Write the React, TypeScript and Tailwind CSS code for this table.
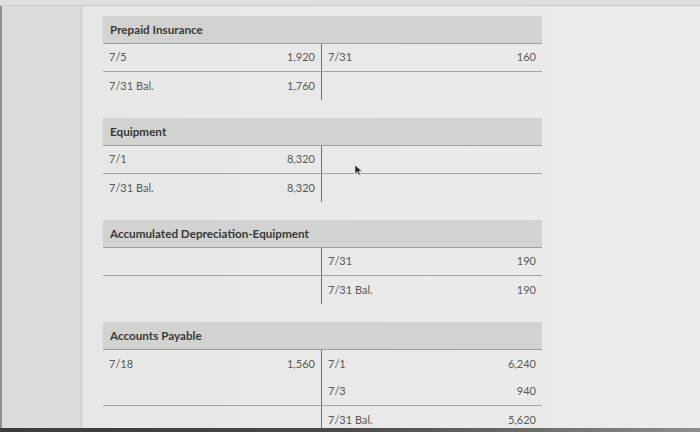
import { Fragment } from 'react';

type Cell = { label?: string; value?: string };
type Row = { left?: Cell; right?: Cell; line?: boolean };
type Account = { title: string; rows: Row[] };

const accounts: Account[] = [
  {
    title: 'Prepaid Insurance',
    rows: [
      { left: { label: '7/5', value: '1,920' }, right: { label: '7/31', value: '160' }, line: true },
      { left: { label: '7/31 Bal.', value: '1,760' } },
    ],
  },
  {
    title: 'Equipment',
    rows: [
      { left: { label: '7/1', value: '8,320' }, line: true },
      { left: { label: '7/31 Bal.', value: '8,320' } },
    ],
  },
  {
    title: 'Accumulated Depreciation-Equipment',
    rows: [
      { right: { label: '7/31', value: '190' }, line: true },
      { right: { label: '7/31 Bal.', value: '190' } },
    ],
  },
  {
    title: 'Accounts Payable',
    rows: [
      { left: { label: '7/18', value: '1,560' }, right: { label: '7/1', value: '6,240' } },
      { right: { label: '7/3', value: '940' }, line: true },
      { right: { label: '7/31 Bal.', value: '5,620' } },
    ],
  },
];

function Side({ cell }: { cell?: Cell }) {
  return (
    <div className="flex flex-1 items-center justify-between px-[6px]">
      <span>{cell?.label}</span>
      <span>{cell?.value}</span>
    </div>
  );
}

function TAccount({ account }: { account: Account }) {
  return (
    <div className="w-[439px] shrink-0">
      <div className="flex h-[28px] items-center border-b border-[#9d9e9c] bg-[#d2d3d1] px-[7px] text-[11.7px] font-bold text-[#383838]">
        {account.title}
      </div>
      <div className="text-[11px] text-[#585858]">
        {account.rows.map((row, i) => (
          <div
            key={i}
            className={`flex h-[28px] ${row.line ? 'border-b border-[#a3a4a2]' : ''}`}
          >
            <div className="flex w-[219px] border-r border-[#6e6f6d]">
              <Side cell={row.left} />
            </div>
            <Side cell={row.right} />
          </div>
        ))}
      </div>
    </div>
  );
}

function Cursor() {
  return (
    <svg
      className="absolute left-[354px] top-[164px]"
      width="9"
      height="12"
      viewBox="0 0 9 12"
    >
      <path d="M1 1 L1 10 L3.3 7.8 L5 11.3 L6.4 10.6 L4.8 7.2 L8 7.2 Z" fill="#222" stroke="#eee" strokeWidth="0.6" />
    </svg>
  );
}

export default function App() {
  return (
    <div
      className="relative flex h-[432px] w-[700px] flex-col overflow-hidden bg-[#e8e9e7]"
      style={{ fontFamily: 'Lato, "Open Sans", sans-serif' }}
    >
      <div className="h-[6px] shrink-0 border-b border-[#c9cac8] bg-[#dedfdd]" />
      <div className="flex min-h-0 flex-1 overflow-hidden">
        <aside className="w-[82px] shrink-0 border-l-2 border-r border-l-[#8f908e] border-r-[#c6c7c5] bg-[#dcdddb]" />
        <main className="flex flex-1 flex-col gap-[18px] bg-gradient-to-r from-[#e7e8e6] to-[#ebeceb] pl-[21px] pt-[10px]">
          {accounts.map((a) => (
            <Fragment key={a.title}>
              <TAccount account={a} />
            </Fragment>
          ))}
        </main>
      </div>
      <div className="h-[4px] shrink-0 bg-gradient-to-r from-[#3b3a3e] via-[#4a4a46] to-[#8d8e8b]" />
      <Cursor />
    </div>
  );
}
